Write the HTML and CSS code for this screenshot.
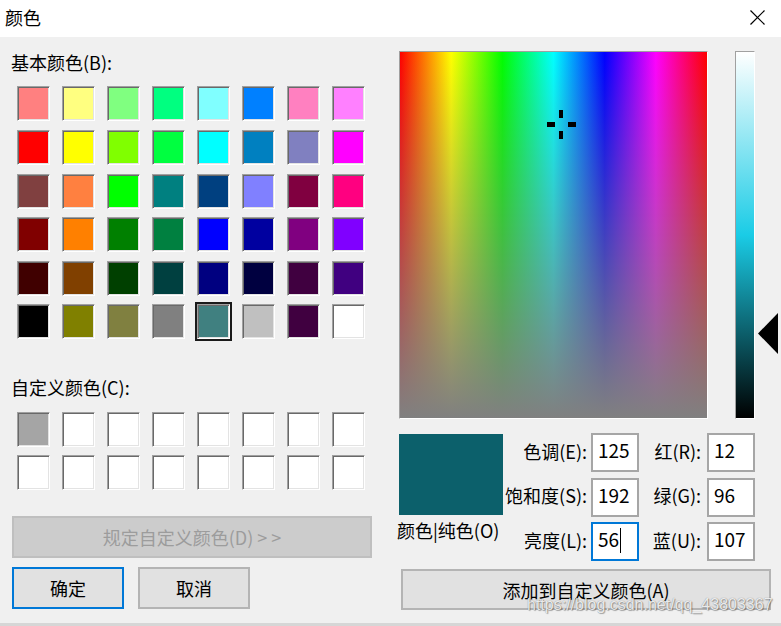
FILE: index.html
```html
<!DOCTYPE html>
<html lang="zh-CN">
<head>
<meta charset="utf-8">
<title>颜色</title>
<link rel="stylesheet" href="styles.css">
</head>
<body>
<div class="window">
  <div class="titlebar">
    <span class="title">颜色</span>
    <svg class="close" width="15" height="15" viewBox="0 0 15 15"><path d="M0.5 0.5L14.5 14.5M14.5 0.5L0.5 14.5" stroke="#000" stroke-width="1.2" fill="none"/></svg>
  </div>
  <div class="main">
    <div class="left">
      <div class="label label-basic">基本颜色(B):</div>
      <div class="swatches basic">
        <div class="sw" style="background:#ff8080"></div>
        <div class="sw" style="background:#ffff80"></div>
        <div class="sw" style="background:#80ff80"></div>
        <div class="sw" style="background:#00ff80"></div>
        <div class="sw" style="background:#80ffff"></div>
        <div class="sw" style="background:#0080ff"></div>
        <div class="sw" style="background:#ff80c0"></div>
        <div class="sw" style="background:#ff80ff"></div>

        <div class="sw" style="background:#ff0000"></div>
        <div class="sw" style="background:#ffff00"></div>
        <div class="sw" style="background:#80ff00"></div>
        <div class="sw" style="background:#00ff40"></div>
        <div class="sw" style="background:#00ffff"></div>
        <div class="sw" style="background:#0080c0"></div>
        <div class="sw" style="background:#8080c0"></div>
        <div class="sw" style="background:#ff00ff"></div>

        <div class="sw" style="background:#804040"></div>
        <div class="sw" style="background:#ff8040"></div>
        <div class="sw" style="background:#00ff00"></div>
        <div class="sw" style="background:#008080"></div>
        <div class="sw" style="background:#004080"></div>
        <div class="sw" style="background:#8080ff"></div>
        <div class="sw" style="background:#800040"></div>
        <div class="sw" style="background:#ff0080"></div>

        <div class="sw" style="background:#800000"></div>
        <div class="sw" style="background:#ff8000"></div>
        <div class="sw" style="background:#008000"></div>
        <div class="sw" style="background:#008040"></div>
        <div class="sw" style="background:#0000ff"></div>
        <div class="sw" style="background:#0000a0"></div>
        <div class="sw" style="background:#800080"></div>
        <div class="sw" style="background:#8000ff"></div>

        <div class="sw" style="background:#400000"></div>
        <div class="sw" style="background:#804000"></div>
        <div class="sw" style="background:#004000"></div>
        <div class="sw" style="background:#004040"></div>
        <div class="sw" style="background:#000080"></div>
        <div class="sw" style="background:#000040"></div>
        <div class="sw" style="background:#400040"></div>
        <div class="sw" style="background:#400080"></div>

        <div class="sw" style="background:#000000"></div>
        <div class="sw" style="background:#808000"></div>
        <div class="sw" style="background:#808040"></div>
        <div class="sw" style="background:#808080"></div>
        <div class="sw selected" style="background:#408080"></div>
        <div class="sw" style="background:#c0c0c0"></div>
        <div class="sw" style="background:#400040"></div>
        <div class="sw" style="background:#ffffff"></div>
      </div>

      <div class="label label-custom">自定义颜色(C):</div>
      <div class="swatches custom">
        <div class="sw" style="background:#a5a5a5"></div>
        <div class="sw"></div><div class="sw"></div><div class="sw"></div>
        <div class="sw"></div><div class="sw"></div><div class="sw"></div><div class="sw"></div>
        <div class="sw"></div><div class="sw"></div><div class="sw"></div><div class="sw"></div>
        <div class="sw"></div><div class="sw"></div><div class="sw"></div><div class="sw"></div>
      </div>

      <div class="btn btn-define">规定自定义颜色(D) &gt; &gt;</div>
      <div class="btn-row">
        <div class="btn btn-ok">确定</div>
        <div class="btn btn-cancel">取消</div>
      </div>
    </div>

    <div class="right">
      <div class="pickers">
        <div class="spectrum">
          <svg class="cross" width="31" height="31" viewBox="0 0 31 31">
            <rect x="13" y="1" width="4" height="8" fill="#000"/>
            <rect x="13" y="22" width="4" height="8" fill="#000"/>
            <rect x="1" y="13" width="8" height="5" fill="#000"/>
            <rect x="22" y="13" width="8" height="5" fill="#000"/>
          </svg>
        </div>
        <div class="lum">
          <svg class="arrow" width="20" height="41" viewBox="0 0 20 41"><polygon points="0,20.5 20,0 20,41" fill="#000"/></svg>
        </div>
      </div>

      <div class="controls">
        <div class="preview"></div>
        <div class="flabel c2 r1">色调(E):</div>
        <div class="field c3 r1">125</div>
        <div class="flabel c4 r1">红(R):</div>
        <div class="field c5 r1">12</div>

        <div class="flabel c2 r2">饱和度(S):</div>
        <div class="field c3 r2">192</div>
        <div class="flabel c4 r2">绿(G):</div>
        <div class="field c5 r2">96</div>

        <div class="solid">颜色|纯色(O)</div>
        <div class="flabel c2 r3">亮度(L):</div>
        <div class="field focus c3 r3">56<span class="caret"></span></div>
        <div class="flabel c4 r3">蓝(U):</div>
        <div class="field c5 r3">107</div>
      </div>

      <div class="btn btn-add">添加到自定义颜色(A)</div>
    </div>
  </div>
  <div class="watermark">https://blog.csdn.net/qq_43803367</div>
</div>
</body>
</html>
```

FILE: styles.css
```css
html, body {
  margin: 0;
  padding: 0;
}

body {
  background: #f0f0f0;
  font-family: "Noto Sans CJK SC", "Noto Sans", sans-serif;
  font-size: 18px;
  color: #000;
}

.window {
  position: relative;
  width: 781px;
  height: 626px;
  overflow: hidden;
  background: #f0f0f0;
}

/* title bar */
.titlebar {
  height: 37px;
  background: #fff;
  display: flex;
  align-items: center;
  justify-content: space-between;
  padding: 0 16px 0 5px;
  box-sizing: border-box;
}

.title {
  font-size: 18px;
  line-height: 24px;
  margin-top: -3px;
}

.close {
  display: block;
  margin-top: -2px;
}

.main {
  display: flex;
  height: 586px;
  border-bottom: 3px solid #d6d6d6;
}

/* left column */
.left {
  width: 390px;
  flex: none;
}

.label {
  line-height: 24px;
  margin-left: 11px;
  white-space: nowrap;
}

.label-basic {
  margin-top: 13px;
}

.label-custom {
  margin-top: 36px;
}

.swatches {
  display: grid;
  grid-template-columns: repeat(8, 33px);
  column-gap: 12px;
  margin-left: 17px;
}

.basic {
  margin-top: 12px;
  grid-template-rows: 44px 44px 43px 44px 43px 35px;
}

.custom {
  margin-top: 13px;
  grid-template-rows: 43px 35px;
}

.sw {
  width: 33px;
  height: 35px;
  box-sizing: border-box;
  background: #fff;
  border: 1px solid;
  border-color: #a0a0a0 #ffffff #ffffff #a0a0a0;
  box-shadow: inset 1px 1px 0 #696969, inset -1px -1px 0 #e3e3e3;
}

.sw.selected {
  outline: 2px solid #1a1a1a;
  outline-offset: 0;
}

/* buttons */
.btn {
  box-sizing: border-box;
  height: 42px;
  border: 2px solid #b4b4b4;
  background: #e1e1e1;
  display: flex;
  align-items: center;
  justify-content: center;
  line-height: 24px;
  white-space: nowrap;
}

.btn-define {
  margin: 26px 0 0 12px;
  width: 360px;
  background: #cccccc;
  border-color: #bfbfbf;
  color: #9c9c9c;
}

.btn-row {
  display: flex;
  gap: 14px;
  margin: 9px 0 0 12px;
}

.btn-ok,
.btn-cancel {
  width: 112px;
}

.btn-ok {
  border-color: #0078d7;
}

/* right column */
.right {
  flex: 1;
  padding: 14px 0 0 9px;
  box-sizing: border-box;
}

.pickers {
  display: flex;
  gap: 27px;
}

.spectrum {
  position: relative;
  width: 309px;
  height: 368px;
  box-sizing: border-box;
  border: 1px solid;
  border-color: #a0a0a0 #ffffff #ffffff #a0a0a0;
  background:
    linear-gradient(to bottom, rgba(128, 128, 128, 0), #808080),
    linear-gradient(to right, #ff0000, #ffff00, #00ff00, #00ffff, #0000ff, #ff00ff, #ff0000);
}

.cross {
  position: absolute;
  left: 146px;
  top: 57px;
}

.lum {
  position: relative;
  width: 20px;
  height: 368px;
  box-sizing: border-box;
  border: 1px solid;
  border-color: #a0a0a0 #ffffff #ffffff #a0a0a0;
  background: linear-gradient(to bottom, #ffffff, rgb(26, 204, 230), #000000);
}

.arrow {
  position: absolute;
  left: 22px;
  top: 261px;
}

/* controls */
.controls {
  display: grid;
  grid-template-columns: 104px 88px 48px 68px 48px;
  grid-template-rows: 39px 39px 39px;
  row-gap: 5.5px;
  margin-top: 14px;
}

.preview {
  grid-column: 1;
  grid-row: 1 / 3;
  align-self: start;
  margin-top: 1px;
  height: 81px;
  background: #0c606b;
}

.solid {
  grid-column: 1;
  grid-row: 3;
  align-self: start;
  line-height: 20px;
  margin: -2px 0 0 -2px;
  white-space: nowrap;
}

.flabel {
  align-self: center;
  text-align: right;
  line-height: 24px;
  margin-top: -4px;
  white-space: nowrap;
}

.c2 { grid-column: 2; padding-right: 4px; }
.c3 { grid-column: 3; }
.c4 { grid-column: 4; padding-right: 6px; }
.c5 { grid-column: 5; }
.r1 { grid-row: 1; }
.r2 { grid-row: 2; }
.r3 { grid-row: 3; }

.field {
  box-sizing: border-box;
  height: 39px;
  border: 2px solid #a6a6a6;
  background: #fff;
  padding-left: 5px;
  font-size: 19px;
  line-height: 29px;
  white-space: nowrap;
}

.field.focus {
  border-color: #0078d7;
}

.caret {
  display: inline-block;
  width: 1px;
  height: 25px;
  background: #000;
  margin-left: 1px;
  vertical-align: -6px;
}

.btn-add {
  margin: 8px 0 0 2px;
  width: 370px;
  height: 41px;
}

/* watermark overlay */
.watermark {
  position: absolute;
  left: 527px;
  top: 595px;
  font-family: "Liberation Sans", Arial, sans-serif;
  font-size: 16px;
  line-height: 20px;
  color: rgba(255, 255, 255, 0.85);
  text-shadow: 0 0 1px rgba(0, 0, 0, 0.45), 1px 1px 1px rgba(0, 0, 0, 0.3);
  white-space: nowrap;
}
```
